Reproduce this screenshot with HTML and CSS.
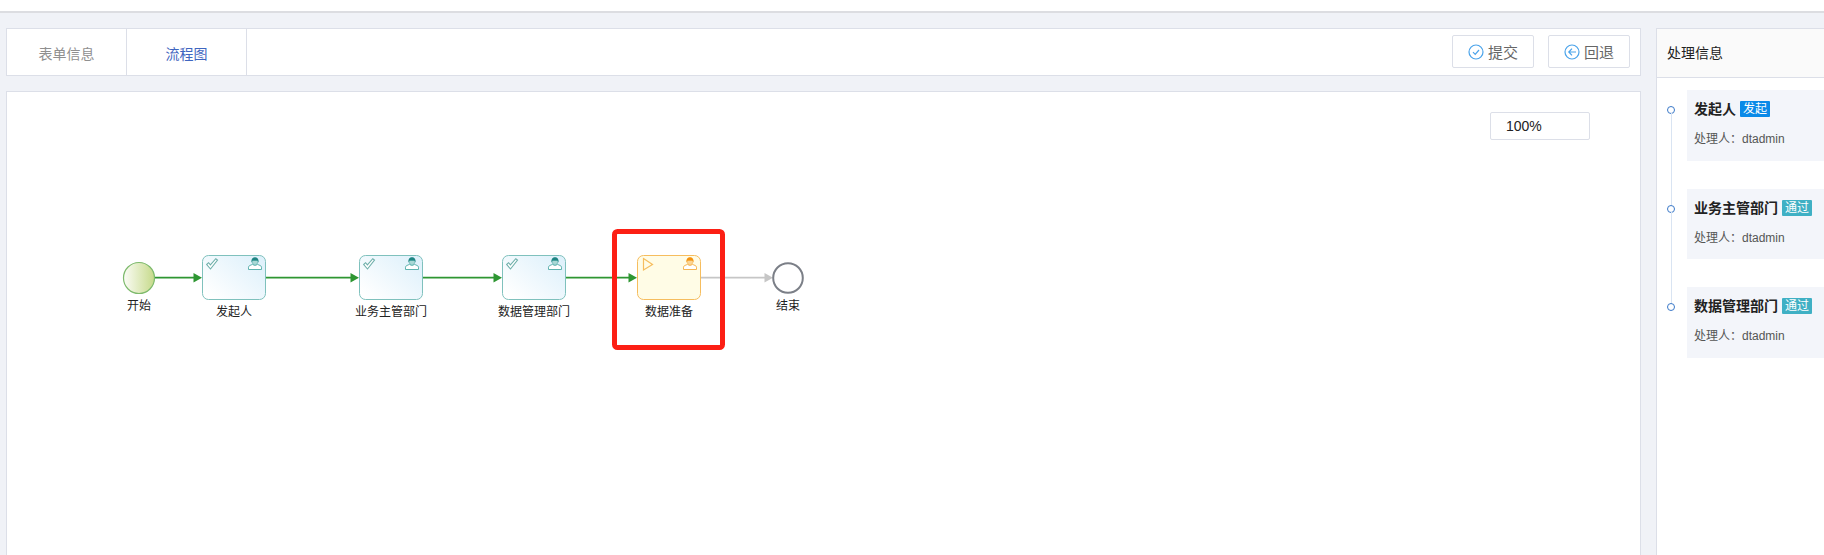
FILE: index.html
```html
<!DOCTYPE html>
<html lang="zh-CN">
<head>
    <meta charset="UTF-8">
    <title>流程图</title>
    <link rel="stylesheet" href="styles.css">
</head>
<body>
    <div class="topbar"></div>
    <div class="main">
        <div class="left">
            <div class="tabs">
                <div class="tab">表单信息</div>
                <div class="tab active">流程图</div>
                <div class="actions">
                    <button class="btn">
                        <svg class="btn-icon" viewBox="0 0 16 16"><circle cx="8" cy="8" r="7"/><path d="M5 8.2l2.2 2.2L11 6"/></svg>
                        <span>提交</span>
                    </button>
                    <button class="btn">
                        <svg class="btn-icon" viewBox="0 0 16 16"><circle cx="8" cy="8" r="7"/><path d="M8 4.6L4.8 8 8 11.4M4.8 8H12"/></svg>
                        <span>回退</span>
                    </button>
                </div>
            </div>
            <div class="canvas">
                <div class="zoom-box">100%</div>
                <svg class="diagram" xmlns="http://www.w3.org/2000/svg">
                    <defs>
                        <linearGradient id="startFill" x1="0" y1="0" x2="1" y2="0">
                            <stop offset="0" stop-color="#fbfcf6"/>
                            <stop offset="1" stop-color="#c6da8a"/>
                        </linearGradient>
                        <linearGradient id="doneFill" x1="0" y1="1" x2="1" y2="0.2">
                            <stop offset="0.1" stop-color="#ffffff"/>
                            <stop offset="1" stop-color="#dff1fb"/>
                        </linearGradient>
                        <g id="check">
                            <path d="M0.7 6.500L2.600 4.700 4.400 6.800 9.800 0.7 11.500 2 4.500 11z"/>
                        </g>
                        <g id="user">
                            <path class="user-body" d="M0.5 12.500V10.200C0.5 8.600 2.600 8.200 4.600 7.400C5.500 8.400 8.500 8.400 9.400 7.400C11.400 8.200 13.500 8.600 13.500 10.200V12.500z"/>
                            <path class="user-face" d="M4.100 3.500C4.100 6.200 5.300 8.200 7 8.200S9.900 6.200 9.900 3.500z"/>
                            <path class="user-hair" d="M3.500 5.800C3 1.800 4.800 0.200 7 0.200S11 1.800 10.500 5.800L9.800 3.800C8.500 3.300 5.500 3.300 4.200 3.800z"/>
                        </g>
                    </defs>
                    <g transform="translate(-7,-92)">
                        <path class="flow" d="M155 277.700H195M266 277.700H352M423 277.700H495M566 277.700H630"/>
                        <path class="arrow" d="M193.500 273l8.500 4.700-8.500 4.700zM350.500 273l8.500 4.700-8.500 4.700zM493.500 273l8.500 4.700-8.500 4.700zM628.500 273l8.500 4.700-8.500 4.700z"/>
                        <path class="flow-todo" d="M701 277.700H766"/>
                        <path class="arrow-todo" d="M764.500 273l8.500 4.700-8.500 4.700z"/>

                        <circle class="start" cx="139" cy="278" r="15.500"/>
                        <text class="node-label" x="139" y="310">开始</text>

                        <rect class="task" x="202.500" y="255.500" width="63" height="44" rx="6"/>
                        <use class="check" href="#check" x="206" y="258"/>
                        <use class="user-done" href="#user" x="248" y="257"/>
                        <text class="node-label" x="234" y="316">发起人</text>

                        <rect class="task" x="359.500" y="255.500" width="63" height="44" rx="6"/>
                        <use class="check" href="#check" x="363" y="258"/>
                        <use class="user-done" href="#user" x="405" y="257"/>
                        <text class="node-label" x="391" y="316">业务主管部门</text>

                        <rect class="task" x="502.500" y="255.500" width="63" height="44" rx="6"/>
                        <use class="check" href="#check" x="506" y="258"/>
                        <use class="user-done" href="#user" x="548" y="257"/>
                        <text class="node-label" x="534" y="316">数据管理部门</text>

                        <rect class="task-active" x="637.500" y="255.500" width="63" height="44" rx="6"/>
                        <path class="play" d="M643.500 258.500L652.500 264.500 643.500 270z"/>
                        <use class="user-active" href="#user" x="683" y="257"/>
                        <text class="node-label" x="669" y="316">数据准备</text>

                        <circle class="end" cx="788" cy="278" r="14.800"/>
                        <text class="node-label" x="788" y="310">结束</text>

                        <rect class="highlight" x="614.500" y="231.500" width="108" height="116" rx="3"/>
                    </g>
                </svg>
            </div>
        </div>
        <div class="panel">
            <div class="panel-head">处理信息</div>
            <div class="timeline">
                <div class="tl-item">
                    <span class="tl-dot"></span>
                    <div class="tl-card">
                        <div class="tl-title">发起人 <span class="tag tag-blue">发起</span></div>
                        <div class="tl-sub">处理人：dtadmin</div>
                    </div>
                </div>
                <div class="tl-item">
                    <span class="tl-dot"></span>
                    <div class="tl-card">
                        <div class="tl-title">业务主管部门 <span class="tag tag-teal">通过</span></div>
                        <div class="tl-sub">处理人：dtadmin</div>
                    </div>
                </div>
                <div class="tl-item">
                    <span class="tl-dot"></span>
                    <div class="tl-card">
                        <div class="tl-title">数据管理部门 <span class="tag tag-teal">通过</span></div>
                        <div class="tl-sub">处理人：dtadmin</div>
                    </div>
                </div>
            </div>
        </div>
    </div>
</body>
</html>
```

FILE: styles.css
```css
* {
    box-sizing: border-box;
}
html, body {
    height: 100%;
}
body {
    margin: 0;
    overflow: hidden;
    background: #f0f2f7;
    font-family: "Liberation Sans", "Noto Sans CJK SC", sans-serif;
    font-size: 14px;
    color: #333;
    display: flex;
    flex-direction: column;
}
.topbar {
    height: 13px;
    background: #fff;
    border-bottom: 2px solid #dcdde1;
}
.main {
    flex: 1;
    min-height: 0;
    display: flex;
    gap: 15px;
    padding: 15px 0 0 6px;
}
.left {
    width: 1635px;
    display: flex;
    flex-direction: column;
    gap: 15px;
}

/* tabs */
.tabs {
    height: 48px;
    display: flex;
    background: #fff;
    border: 1px solid #dcdfe8;
}
.tab {
    width: 120px;
    padding-top: 1px;
    border-right: 1px solid #dcdfe8;
    display: flex;
    align-items: center;
    justify-content: center;
    color: #8f8f8f;
}
.tab.active {
    color: #3f66c0;
}
.actions {
    margin-left: auto;
    display: flex;
    align-items: center;
    gap: 14px;
    padding: 0 10px 2px 0;
}
.btn {
    width: 82px;
    height: 33px;
    background: #fff;
    border: 1px solid #dcdfe8;
    border-radius: 2px;
    font-family: inherit;
    font-size: 15px;
    color: #666;
    display: flex;
    align-items: center;
    justify-content: center;
    gap: 4px;
    padding: 0;
}
.btn-icon {
    width: 16px;
    height: 16px;
    margin-top: 1px;
    fill: none;
    stroke: #4aa3ea;
    stroke-width: 1.2;
}

/* canvas */
.canvas {
    flex: 1;
    min-height: 0;
    position: relative;
    background: #fff;
    border: 1px solid #dcdfe8;
    border-bottom: none;
}
.zoom-box {
    position: absolute;
    top: 20px;
    right: 50px;
    width: 100px;
    height: 28px;
    padding-left: 15px;
    line-height: 26px;
    background: #fff;
    border: 1px solid #dcdfe8;
    border-radius: 2px;
    color: #222;
}
.diagram {
    display: block;
    width: 100%;
    height: 100%;
}
.flow {
    fill: none;
    stroke: #2e9632;
    stroke-width: 1.8;
}
.arrow {
    fill: #2e9632;
}
.flow-todo {
    fill: none;
    stroke: #c6c6c6;
    stroke-width: 1.8;
}
.arrow-todo {
    fill: #c6c6c6;
}
.start {
    fill: url(#startFill);
    stroke: #7dba6c;
    stroke-width: 1.2;
}
.end {
    fill: #fff;
    stroke: #7b7f87;
    stroke-width: 2;
}
.task {
    fill: url(#doneFill);
    stroke: #7fc1bd;
    stroke-width: 1;
}
.task-active {
    fill: #fffce6;
    stroke: #f6bd5e;
    stroke-width: 1;
}
.node-label {
    font-size: 12px;
    fill: #222;
    text-anchor: middle;
}
.check {
    fill: #fff;
    stroke: #6fb0ab;
    stroke-width: 1.1;
}
.play {
    fill: none;
    stroke: #f6bd5e;
    stroke-width: 1.2;
}
.user-done {
    --user-line: #5fb3af;
    --user-hair: #1f8583;
    --user-skin: #a9d8d5;
}
.user-active {
    --user-line: #f5b552;
    --user-hair: #f5930f;
    --user-skin: #fbd596;
}
.user-body {
    fill: #fff;
    stroke: var(--user-line);
    stroke-width: 1;
}
.user-face {
    fill: var(--user-skin);
    stroke: var(--user-line);
    stroke-width: 0.8;
}
.user-hair {
    fill: var(--user-hair);
}
.highlight {
    fill: none;
    stroke: #fc1f14;
    stroke-width: 5;
}

/* right panel */
.panel {
    flex: 1;
    min-width: 0;
    background: #fff;
    border-left: 1px solid #dcdfe8;
    border-top: 1px solid #dcdfe8;
}
.panel-head {
    height: 49px;
    padding: 1px 0 0 10px;
    line-height: 47px;
    background: #fafafa;
    border-bottom: 1px solid #dcdfe8;
    color: #222;
}
.timeline {
    padding-top: 12px;
}
.tl-item {
    position: relative;
    display: flex;
    height: 98.5px;
    padding-left: 10px;
}
.tl-item:not(:last-child)::before {
    content: "";
    position: absolute;
    left: 14px;
    top: 23px;
    width: 1px;
    height: 92px;
    background: #d9e4f2;
}
.tl-dot {
    flex: none;
    width: 8px;
    height: 8px;
    margin: 16px 12px 0 0;
    background: #fff;
    border: 1.5px solid #3a78c8;
    border-radius: 50%;
}
.tl-card {
    flex: 1;
    height: 70.5px;
    padding: 8px 0 0 7px;
    background: #f3f5fa;
}
.tl-title {
    font-weight: bold;
    line-height: 22px;
    color: #222;
    white-space: nowrap;
}
.tag {
    display: inline-block;
    height: 16px;
    padding: 0 3px;
    line-height: 16px;
    font-size: 12px;
    font-weight: normal;
    color: #fff;
    border-radius: 1px;
    vertical-align: 1px;
}
.tag-blue {
    background: #0a8ae8;
}
.tag-teal {
    background: #3fb0c4;
}
.tl-sub {
    margin-top: 9px;
    font-size: 12px;
    line-height: 20px;
    color: #555;
    white-space: nowrap;
}
```
